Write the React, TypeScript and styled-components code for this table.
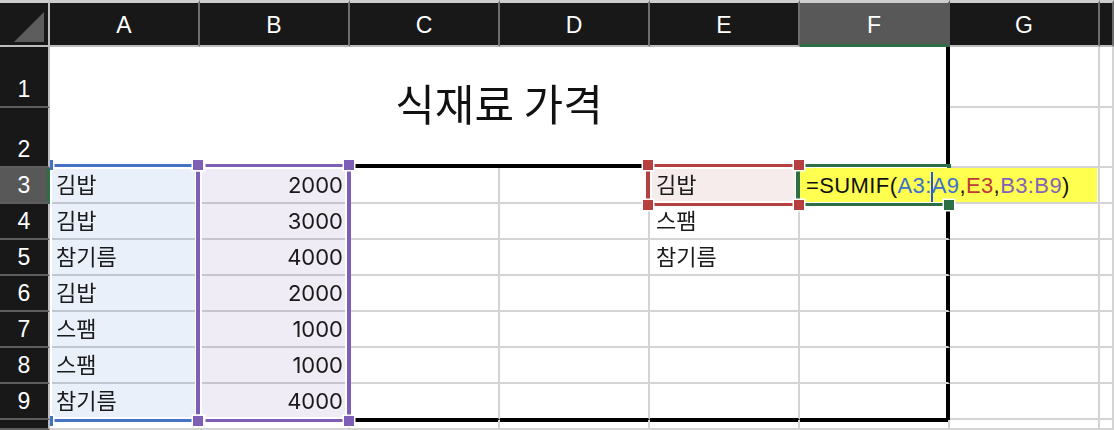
import React from "react";
import styled, { createGlobalStyle, css } from "styled-components";

const GRID = "#d4d4d4";
const INK = "#1b1b1b";
const HEADER_BG = "#181818";
const HEADER_SEL = "#585858";
const HEADER_EDGE = "#bdbdbd";
const ACTIVE = "#2e6e45";

type Tone = "blue" | "purple" | "red" | "green";
type Corner = "tl" | "tr" | "bl" | "br";

const TONES: Record<Tone, { line: string; fill: string; text: string }> = {
  blue: { line: "#4472c4", fill: "#eaf0f9", text: "#3d6fd1" },
  purple: { line: "#7f5fb5", fill: "#f0ecf6", text: "#8462b8" },
  red: { line: "#b5403f", fill: "#f7ecec", text: "#bd3b36" },
  green: { line: ACTIVE, fill: "transparent", text: ACTIVE },
};

const GlobalStyle = createGlobalStyle`
  html, body {
    margin: 0;
    padding: 0;
    background: #fff;
  }
  body {
    font-family: "Noto Sans CJK KR", sans-serif;
  }
`;

const Sheet = styled.div`
  position: relative;
  display: grid;
  grid-template-columns: 50px repeat(7, 150px) 1fr;
  grid-template-rows: 47px 61px 60px repeat(7, 36px) 1fr;
  width: 1114px;
  height: 430px;
  overflow: hidden;
  background: #fff;
`;

const headerText = css`
  font-family: "Liberation Sans", Arial, sans-serif;
  font-size: 23px;
  color: #fff;
`;

const CornerCell = styled.div`
  z-index: 3;
  display: flex;
  align-items: flex-end;
  justify-content: flex-end;
  padding: 0 4px 3px 0;
  background: ${HEADER_BG};
  border-top: 3px solid #cdcdcd;
  border-right: 2px solid ${HEADER_EDGE};
  border-bottom: 2px solid ${HEADER_EDGE};
`;

const CornerMark = styled.span`
  width: 30px;
  height: 30px;
  background: #5d5d5d;
  clip-path: polygon(100% 0, 100% 100%, 0 100%);
`;

const ColHeader = styled.div<{ $selected?: boolean }>`
  ${headerText};
  z-index: 3;
  display: flex;
  align-items: center;
  justify-content: center;
  padding-top: 3px;
  background: ${(p) => (p.$selected ? HEADER_SEL : HEADER_BG)};
  border-top: 3px solid #cdcdcd;
  border-right: 2px solid ${(p) => (p.$selected ? HEADER_SEL : "#6e6e6e")};
  border-bottom: 2px solid ${(p) => (p.$selected ? ACTIVE : HEADER_EDGE)};
  box-shadow: ${(p) => (p.$selected ? `inset 0 -1px 0 ${ACTIVE}` : "none")};
`;

const RowHeader = styled.div<{ $selected?: boolean }>`
  ${headerText};
  z-index: 3;
  display: flex;
  align-items: flex-end;
  justify-content: center;
  padding-bottom: 4px;
  line-height: 25px;
  background: ${(p) => (p.$selected ? HEADER_SEL : HEADER_BG)};
  border-right: 2px solid ${(p) => (p.$selected ? ACTIVE : HEADER_EDGE)};
  border-bottom: 2px solid #5e5e5e;
  box-shadow: ${(p) => (p.$selected ? `inset -1px 0 0 ${ACTIVE}` : "none")};
`;

type CellProps = {
  $align?: "left" | "right";
  $edgeRight?: boolean;
  $edgeBottom?: boolean;
  $edgeTop?: boolean;
};

const edgeShadow = (p: CellProps) => {
  const parts: string[] = [];
  if (p.$edgeRight) parts.push("inset -2px 0 0 #000");
  if (p.$edgeTop) parts.push("inset 0 2px 0 #000");
  return parts.length ? parts.join(", ") : "none";
};

const Cell = styled.div<CellProps>`
  min-width: 0;
  display: flex;
  align-items: flex-end;
  justify-content: ${(p) => (p.$align === "right" ? "flex-end" : "flex-start")};
  padding: 0 5px 4px 6px;
  border-right: 2px solid ${(p) => (p.$edgeRight ? "#000" : GRID)};
  border-bottom: 2px solid ${(p) => (p.$edgeBottom ? "#000" : GRID)};
  box-shadow: ${edgeShadow};
  font-family: "Inter", "Noto Sans CJK KR", sans-serif;
  font-size: 22px;
  line-height: 26px;
  color: ${INK};
  white-space: nowrap;
  overflow: hidden;
`;

const Title = styled.div`
  grid-column: 2 / 8;
  grid-row: 2 / 4;
  display: flex;
  align-items: center;
  justify-content: center;
  padding-bottom: 10px;
  border-right: 2px solid #000;
  border-bottom: 2px solid #000;
  box-shadow: inset -2px -2px 0 #000;
  font-family: "Noto Sans CJK KR", sans-serif;
  font-size: 43px;
  color: #111;
`;

const RangeBox = styled.div<{ $col: string; $row: string; $tone: Tone }>`
  position: absolute;
  grid-column: ${(p) => p.$col};
  grid-row: ${(p) => p.$row};
  top: -4px;
  left: -4px;
  right: -1px;
  bottom: -2px;
  border-style: solid;
  border-width: 3px 4px;
  border-color: ${(p) => TONES[p.$tone].line};
  box-shadow: inset 0 0 0 2px #fff;
  pointer-events: none;

  &::before {
    content: "";
    position: absolute;
    inset: 2px;
    background: ${(p) => TONES[p.$tone].fill};
    mix-blend-mode: multiply;
  }
`;

const Handle = styled.span<{ $at: Corner; $tone: Tone }>`
  position: absolute;
  z-index: 2;
  width: 10px;
  height: 10px;
  background: ${(p) => TONES[p.$tone].line};
  box-shadow: 0 0 0 1.5px #fff;
  ${(p) => (p.$at[0] === "t" ? "top: -7px;" : "bottom: -7px;")}
  ${(p) => (p.$at[1] === "l" ? "left: -7px;" : "right: -7px;")}
`;

const FormulaEditor = styled.div`
  position: absolute;
  grid-column: 7 / 9;
  grid-row: 4 / 5;
  top: 0;
  left: 0;
  right: 3px;
  bottom: 2px;
  padding: 2px 0 0 6px;
  background: #feff4f;
  font-family: "Liberation Sans", Arial, sans-serif;
  font-size: 22px;
  line-height: 32px;
  letter-spacing: 0.4px;
  color: #111;
  white-space: nowrap;
`;

const Ref = styled.span<{ $tone: Tone }>`
  color: ${(p) => TONES[p.$tone].text};
`;

const Caret = styled.span`
  display: inline-block;
  width: 2px;
  height: 30px;
  margin: 0 -1px;
  vertical-align: middle;
  background: #2455e6;
`;

const COLUMNS = ["A", "B", "C", "D", "E", "F", "G", ""];

type Row = { n: number; a: string; b: string; e?: string };

const DATA: Row[] = [
  { n: 3, a: "김밥", b: "2000", e: "김밥" },
  { n: 4, a: "김밥", b: "3000", e: "스팸" },
  { n: 5, a: "참기름", b: "4000", e: "참기름" },
  { n: 6, a: "김밥", b: "2000" },
  { n: 7, a: "스팸", b: "1000" },
  { n: 8, a: "스팸", b: "1000" },
  { n: 9, a: "참기름", b: "4000" },
];

const ALL: Corner[] = ["tl", "tr", "bl", "br"];

function Range({ col, row, tone, handles = ALL }: { col: string; row: string; tone: Tone; handles?: Corner[] }) {
  return (
    <RangeBox $col={col} $row={row} $tone={tone}>
      {handles.map((h) => (
        <Handle key={h} $at={h} $tone={tone} />
      ))}
    </RangeBox>
  );
}

export default function App() {
  return (
    <>
      <GlobalStyle />
      <Sheet>
        <CornerCell>
          <CornerMark />
        </CornerCell>
        {COLUMNS.map((c, i) => (
          <ColHeader key={i} $selected={c === "F"}>
            {c}
          </ColHeader>
        ))}

        <RowHeader>1</RowHeader>
        <Title>식재료 가격</Title>
        <Cell />
        <Cell />
        <RowHeader>2</RowHeader>
        <Cell />
        <Cell />

        {DATA.map((r) => {
          const last = r.n === 9;
          return (
            <React.Fragment key={r.n}>
              <RowHeader $selected={r.n === 3}>{r.n}</RowHeader>
              <Cell>{r.a}</Cell>
              <Cell $align="right">{r.b}</Cell>
              <Cell $edgeBottom={last} />
              <Cell $edgeBottom={last} />
              <Cell $edgeBottom={last}>{r.e}</Cell>
              <Cell $edgeRight $edgeBottom={last} />
              <Cell />
              <Cell />
            </React.Fragment>
          );
        })}

        <RowHeader />
        {COLUMNS.map((_, i) => (
          <Cell key={i} $edgeTop={i >= 2 && i <= 5} />
        ))}

        <Range col="2 / 3" row="4 / 11" tone="blue" />
        <Range col="3 / 4" row="4 / 11" tone="purple" />
        <Range col="6 / 7" row="4 / 5" tone="red" />
        <Range col="7 / 8" row="4 / 5" tone="green" handles={["br"]} />

        <FormulaEditor>
          =SUMIF(<Ref $tone="blue">A3:</Ref>
          <Caret />
          <Ref $tone="blue">A9</Ref>,<Ref $tone="red">E3</Ref>,<Ref $tone="purple">B3:B9</Ref>)
        </FormulaEditor>
      </Sheet>
    </>
  );
}
